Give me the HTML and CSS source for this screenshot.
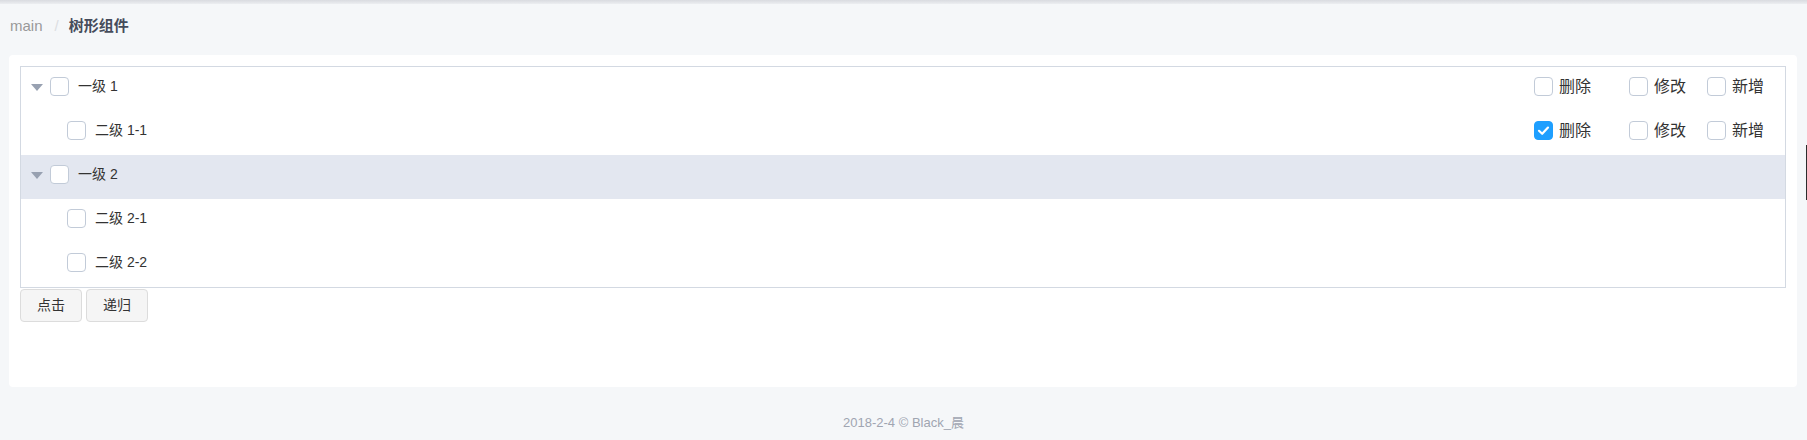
FILE: index.html
```html
<!DOCTYPE html>
<html lang="zh-CN">
<head>
<meta charset="utf-8">
<title>树形组件</title>
<link rel="stylesheet" href="styles.css">
</head>
<body>
<div class="topbar"></div>
<div class="breadcrumb">
  <span class="crumb">main</span>
  <span class="sep">/</span>
  <span class="crumb current">树形组件</span>
</div>
<div class="card">
  <div class="tree">
    <div class="row">
      <span class="arrow"></span>
      <span class="cb"></span>
      <span class="label">一级 1</span>
      <div class="actions">
        <span class="act act-del"><span class="cb"></span><span class="act-label">删除</span></span>
        <span class="act"><span class="cb"></span><span class="act-label">修改</span></span>
        <span class="act"><span class="cb"></span><span class="act-label">新增</span></span>
      </div>
    </div>
    <div class="row child">
      <span class="cb"></span>
      <span class="label">二级 1-1</span>
      <div class="actions">
        <span class="act act-del"><span class="cb checked"><svg viewBox="0 0 19 19" width="19" height="19"><path d="M5 9.8 L8.2 12.8 L14 6.6" fill="none" stroke="#fff" stroke-width="2.2" stroke-linecap="round" stroke-linejoin="round"/></svg></span><span class="act-label">删除</span></span>
        <span class="act"><span class="cb"></span><span class="act-label">修改</span></span>
        <span class="act"><span class="cb"></span><span class="act-label">新增</span></span>
      </div>
    </div>
    <div class="row active">
      <span class="arrow"></span>
      <span class="cb"></span>
      <span class="label">一级 2</span>
    </div>
    <div class="row child">
      <span class="cb"></span>
      <span class="label">二级 2-1</span>
    </div>
    <div class="row child">
      <span class="cb"></span>
      <span class="label">二级 2-2</span>
    </div>
  </div>
  <div class="buttons">
    <button class="btn">点击</button>
    <button class="btn">递归</button>
  </div>
</div>
<div class="footer">2018-2-4 © Black_晨</div>
<div class="edge-line"></div>
</body>
</html>
```
FILE: styles.css
```css
html, body {
  margin: 0;
  padding: 0;
}
body {
  background: #f5f7f9;
  font-family: "Liberation Sans", "Noto Sans CJK SC", sans-serif;
  color: #333;
  height: 440px;
  overflow: hidden;
  position: relative;
}
.topbar {
  height: 4px;
  background: linear-gradient(#d9dbe0, #eceef1);
}
.breadcrumb {
  padding: 12px 10px 0;
  height: 20px;
  line-height: 20px;
  font-size: 15px;
  display: flex;
  align-items: center;
}
.crumb {
  color: #999;
}
.sep {
  color: #dcdee2;
  margin: 0 10px 0 12px;
}
.crumb.current {
  color: #464c5b;
  font-weight: 700;
}
.card {
  margin: 19px 10px 0 9px;
  height: 332px;
  box-sizing: border-box;
  padding: 11px 11px 0;
  background: #fff;
  border-radius: 4px;
}
.tree {
  border: 1px solid #d3d9e2;
}
.row {
  height: 44px;
  box-sizing: border-box;
  padding: 10px 0 0 10px;
  display: flex;
  align-items: flex-start;
}
.row.child {
  padding-left: 46px;
}
.row.active {
  background: #e3e7f0;
}
.arrow {
  width: 0;
  height: 0;
  border-left: 6px solid transparent;
  border-right: 6px solid transparent;
  border-top: 7px solid #98a1b1;
  margin-top: 7px;
  margin-right: 7px;
}
.cb {
  width: 19px;
  height: 19px;
  box-sizing: border-box;
  border: 1px solid #c2cbd8;
  border-radius: 4px;
  background: #fff;
  flex: none;
  display: block;
}
.cb.checked {
  background: #1e9fff;
  border-color: #1e9fff;
}
.cb.checked svg {
  display: block;
  margin: -1px;
}
.label {
  font-size: 14px;
  line-height: 19px;
  margin-left: 9px;
  color: #333;
}
.actions {
  margin-left: auto;
  display: flex;
  padding-right: 21px;
}
.act {
  display: flex;
  align-items: flex-start;
  margin-left: 21px;
}
.act-del {
  margin-right: 17px;
}
.act-label {
  font-size: 16px;
  line-height: 19px;
  margin-left: 6px;
  color: #333;
}
.buttons {
  display: flex;
  gap: 4px;
  padding-top: 1px;
}
.btn {
  height: 33px;
  padding: 0 16px;
  border: 1px solid #dcdcdc;
  border-radius: 4px;
  background: #f5f5f5;
  color: #333;
  font-family: "Liberation Sans", "Noto Sans CJK SC", sans-serif;
  font-size: 14px;
  line-height: 31px;
}
.footer {
  padding-top: 26px;
  line-height: 20px;
  text-align: center;
  font-size: 13px;
  color: #a0a5b1;
}
.edge-line {
  position: absolute;
  right: 0;
  top: 145px;
  width: 1px;
  height: 55px;
  background: #2d2d2d;
}
```
